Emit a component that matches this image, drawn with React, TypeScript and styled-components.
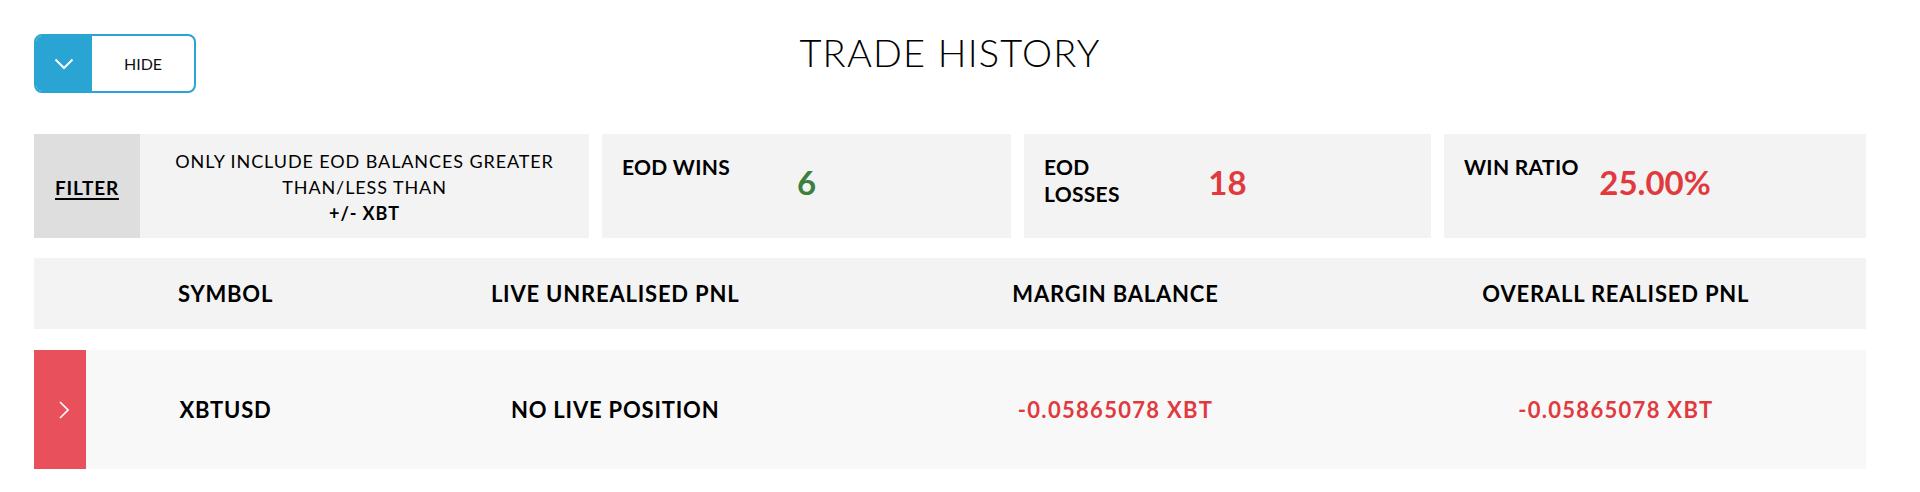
import React from "react";
import styled, { createGlobalStyle } from "styled-components";

const Global = createGlobalStyle`
  html, body { margin: 0; padding: 0; background: #ffffff; }
  body { font-family: "Lato", "Liberation Sans", sans-serif; color: #000; }
`;

const Page = styled.div`
  width: 1832px;
  margin-left: 34px;
  padding-top: 30px;
`;

const TopBar = styled.div`
  display: grid;
  grid-template-columns: 1fr auto 1fr;
  align-items: start;
`;

const ToggleButton = styled.button`
  margin-top: 4px;
  width: 162px;
  height: 59px;
  display: flex;
  padding: 0;
  border: 2px solid #2aa4d3;
  border-radius: 8px;
  background: #ffffff;
  overflow: hidden;
  cursor: pointer;
  font-family: inherit;
`;

const ToggleIcon = styled.span`
  width: 56px;
  background: #2aa4d3;
  display: flex;
  align-items: center;
  justify-content: center;
`;

const ToggleLabel = styled.span`
  flex: 1;
  display: flex;
  align-items: center;
  justify-content: center;
  font-size: 16px;
  font-weight: 400;
  color: #111;
`;

const Title = styled.h1`
  margin: 0;
  font-size: 38px;
  font-weight: 300;
  line-height: 1.2;
  letter-spacing: 1.2px;
`;

const Stats = styled.div`
  margin-top: 41px;
  display: grid;
  grid-template-columns: 555fr 409fr 407fr 422fr;
  gap: 13px;
  height: 104px;
`;

const FilterCard = styled.div`
  display: flex;
  background: #f3f3f3;
`;

const FilterTag = styled.div`
  width: 106px;
  background: #dedede;
  display: flex;
  align-items: center;
  justify-content: center;
  padding-top: 2px;
  box-sizing: border-box;
  font-size: 19px;
  font-weight: 700;
  letter-spacing: 0.8px;
  text-decoration: underline;
  text-decoration-thickness: 2px;
  text-underline-offset: 3px;
`;

const FilterText = styled.div`
  flex: 1;
  display: flex;
  flex-direction: column;
  align-items: center;
  justify-content: center;
  text-align: center;
  font-size: 18px;
  font-weight: 400;
  letter-spacing: 0.9px;
  line-height: 26px;
  padding-top: 2px;
`;

const Strong = styled.span`
  font-weight: 700;
`;

const StatCard = styled.div`
  background: #f3f3f3;
  padding: 19px 20px;
  display: grid;
  grid-template-columns: repeat(3, 1fr);
  align-items: start;
`;

const StatLabel = styled.div`
  font-size: 21px;
  font-weight: 700;
  letter-spacing: 0.3px;
  line-height: 27px;
`;

const StatValue = styled.div<{ $tone: "green" | "red" }>`
  text-align: center;
  padding-top: 10px;
  font-size: 33px;
  font-weight: 700;
  line-height: 38px;
  color: ${(p) => (p.$tone === "green" ? "#3d7f3d" : "#e03a3e")};
`;

const Row = styled.div<{ $kind: "head" | "body" }>`
  display: grid;
  grid-template-columns: 52px 279px 1fr 1fr 1fr;
  align-items: stretch;
  margin-top: ${(p) => (p.$kind === "head" ? "20px" : "21px")};
  height: ${(p) => (p.$kind === "head" ? "71px" : "119px")};
  background: ${(p) => (p.$kind === "head" ? "#f3f3f3" : "#f8f8f8")};
`;

const Cell = styled.div<{ $red?: boolean }>`
  display: flex;
  align-items: center;
  justify-content: center;
  font-size: 22px;
  font-weight: 700;
  letter-spacing: ${(p) => (p.$red ? "1.3px" : "0.8px")};
  color: ${(p) => (p.$red ? "#e03a3e" : "#000")};
`;

const Expander = styled.div`
  background: #e8505b;
  display: flex;
  align-items: center;
  justify-content: center;
  padding-left: 8px;
`;

export default function App() {
  return (
    <>
      <Global />
      <Page>
        <TopBar>
          <div>
            <ToggleButton>
              <ToggleIcon>
                <svg width="20" height="12" viewBox="0 0 20 12" fill="none">
                  <path d="M1.5 1.5 L10 10 L18.5 1.5" stroke="#fff" strokeWidth="2" />
                </svg>
              </ToggleIcon>
              <ToggleLabel>HIDE</ToggleLabel>
            </ToggleButton>
          </div>
          <Title>TRADE HISTORY</Title>
          <div />
        </TopBar>

        <Stats>
          <FilterCard>
            <FilterTag>FILTER</FilterTag>
            <FilterText>
              <span>ONLY INCLUDE EOD BALANCES GREATER</span>
              <span>THAN/LESS THAN</span>
              <Strong>+/- XBT</Strong>
            </FilterText>
          </FilterCard>
          <StatCard>
            <StatLabel>EOD WINS</StatLabel>
            <StatValue $tone="green">6</StatValue>
          </StatCard>
          <StatCard>
            <StatLabel>EOD LOSSES</StatLabel>
            <StatValue $tone="red">18</StatValue>
          </StatCard>
          <StatCard>
            <StatLabel>WIN RATIO</StatLabel>
            <StatValue $tone="red">25.00%</StatValue>
          </StatCard>
        </Stats>

        <Row $kind="head">
          <div />
          <Cell>SYMBOL</Cell>
          <Cell>LIVE UNREALISED PNL</Cell>
          <Cell>MARGIN BALANCE</Cell>
          <Cell>OVERALL REALISED PNL</Cell>
        </Row>
        <Row $kind="body">
          <Expander>
            <svg width="10" height="18" viewBox="0 0 10 18" fill="none">
              <path d="M1 1 L9 9 L1 17" stroke="#fff" strokeWidth="1.6" />
            </svg>
          </Expander>
          <Cell>XBTUSD</Cell>
          <Cell>NO LIVE POSITION</Cell>
          <Cell $red>-0.05865078 XBT</Cell>
          <Cell $red>-0.05865078 XBT</Cell>
        </Row>
      </Page>
    </>
  );
}
